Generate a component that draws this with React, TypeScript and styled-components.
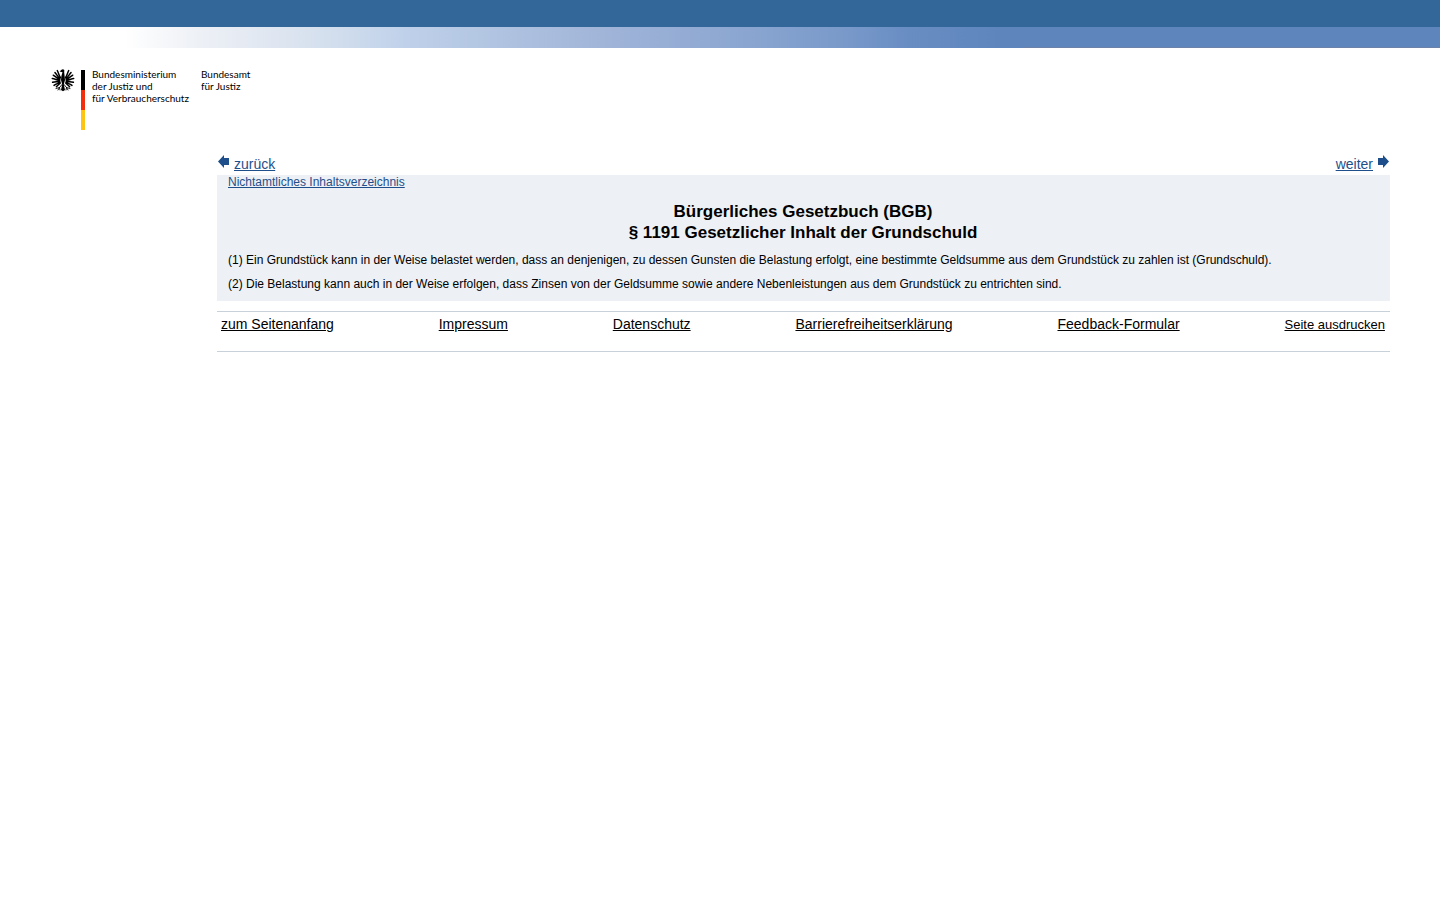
import React from "react";
import styled, { createGlobalStyle } from "styled-components";

const GlobalStyle = createGlobalStyle`
  body {
    margin: 0;
    background: #fff;
    color: #000;
    font-family: "Liberation Sans", Arial, sans-serif;
    font-size: 14px;
    line-height: 14px;
  }
`;

const TopBar = styled.div`
  height: 27px;
  background: #336799;
`;

const FadeBar = styled.div`
  height: 21px;
  background:
    linear-gradient(to right, transparent 1024px, #6c83a9 1024px) bottom / 100% 1px no-repeat,
    linear-gradient(
      to right,
      #fff 125px,
      #eef1f6 195px,
      #e2e8f2 260px,
      #d2deed 335px,
      #bfd1ea 405px,
      #b0c3e0 500px,
      #9fb3d8 615px,
      #8ca7d1 735px,
      #7a9aca 840px,
      #688dc3 910px,
      #5e86bd 1000px
    );
`;

const Header = styled.header`
  padding: 20px 50px 0;
`;

const Logo = styled.a`
  display: flex;
  align-items: flex-start;
  color: #000;
  text-decoration: none;
  font-family: Lato, sans-serif;
  font-size: 10px;
  line-height: 12px;
`;

const Eagle = styled.svg`
  width: 24px;
  height: 24px;
  margin: 0 6px 0 1px;
`;

const Flag = styled.span`
  width: 4px;
  height: 60px;
  margin: 2px 7px 0 0;
  background: linear-gradient(#000 20px, #f22e0c 20px 40px, #fdc411 40px);
`;

const LogoText = styled.span`
  white-space: nowrap;
  margin-right: 12px;
`;

const Main = styled.main`
  margin: 23px 50px 0 217px;
`;

const Pager = styled.nav`
  display: flex;
  justify-content: space-between;
  height: 22px;
`;

const PagerLink = styled.a`
  display: flex;
  gap: 5px;
  color: #1f4f8a;
  line-height: 22px;
`;

const Arrow = styled.svg`
  width: 12px;
  height: 14px;
  margin-top: 2px;
`;

const Law = styled.article`
  background: #edf0f5;
  padding: 0 12px 10px 11px;
`;

const ContentsLink = styled.a`
  display: block;
  width: fit-content;
  color: #1f4f8a;
  font-size: 12px;
  line-height: 14px;
`;

const Title = styled.h1`
  margin: 12px 0 10px;
  text-align: center;
  font-size: 17px;
  line-height: 21px;
`;

const Paragraph = styled.p`
  margin: 0 0 10px;
  font-size: 12px;
  line-height: 14px;

  &:last-child {
    margin: 0;
  }
`;

const Footer = styled.footer`
  display: flex;
  justify-content: space-between;
  align-items: baseline;
  margin-top: 10px;
  padding: 5px 5px 19px 4px;
  border-top: 1px solid #c8d0da;
  border-bottom: 1px solid #c8d0da;
`;

const FooterLink = styled.a<{ $small?: boolean }>`
  color: #000;
  font-size: ${({ $small }) => ($small ? 13 : 14)}px;
`;

const footerLinks = [
  { label: "zum Seitenanfang" },
  { label: "Impressum" },
  { label: "Datenschutz" },
  { label: "Barrierefreiheitserklärung" },
  { label: "Feedback-Formular" },
  { label: "Seite ausdrucken", small: true },
];

function FederalEagle() {
  const wing = (
    <g fill="none" stroke="#000" strokeLinecap="round">
      <path
        strokeWidth="1.5"
        d="M9.500 9.500C7.800 7.500 7.500 4.500 6.300 2.600M9 10.500C7 9.500 6 6.500 4 4.600M8.800 11.500C6.500 11 5 8.500 2.300 7.200M8.800 12.300C6 12.200 4 10.800 1.300 10.600M8.800 13.500C6.500 14.200 4 13.500 1.600 14.200M9 14.500C7 15.500 5 15.800 3 17.400M9.300 15C8 16.500 7 17 5.400 18.800"
      />
      <path strokeWidth=".9" d="M11 16.500L8.500 19.500L5 20.500M8.500 19.500L7 22M8.500 19.500L9 22" />
    </g>
  );
  return (
    <Eagle viewBox="0 0 24 24" aria-hidden="true">
      {wing}
      <g transform="matrix(-1 0 0 1 24 0)">{wing}</g>
      <path d="M8.600 3.400L10.500 1.800Q12 .6 13.300 2L13.200 4.500L13.600 8L14 12L12.800 16.500L14 22L12 23.300L10 22L11.200 16.500L10 12L10.400 8L11.500 4.200Z" />
    </Eagle>
  );
}

function PagerArrow({ forward = false }: { forward?: boolean }) {
  return (
    <Arrow viewBox="0 0 12 14" aria-hidden="true">
      <path
        fill="#1f4f8a"
        d="M1 6.500L7 0V3H12V10H7V13Z"
        transform={forward ? "matrix(-1 0 0 1 12 0)" : undefined}
      />
    </Arrow>
  );
}

export default function App() {
  return (
    <>
      <GlobalStyle />
      <TopBar />
      <FadeBar />
      <Header>
        <Logo href="#">
          <FederalEagle />
          <Flag />
          <LogoText>
            Bundesministerium
            <br />
            der Justiz und
            <br />
            für Verbraucherschutz
          </LogoText>
          <LogoText>
            Bundesamt
            <br />
            für Justiz
          </LogoText>
        </Logo>
      </Header>
      <Main>
        <Pager>
          <PagerLink href="#">
            <PagerArrow />
            zurück
          </PagerLink>
          <PagerLink href="#">
            weiter
            <PagerArrow forward />
          </PagerLink>
        </Pager>
        <Law>
          <ContentsLink href="#">Nichtamtliches Inhaltsverzeichnis</ContentsLink>
          <Title>
            Bürgerliches Gesetzbuch (BGB)
            <br />§ 1191 Gesetzlicher Inhalt der Grundschuld
          </Title>
          <Paragraph>
            (1) Ein Grundstück kann in der Weise belastet werden, dass an denjenigen, zu dessen
            Gunsten die Belastung erfolgt, eine bestimmte Geldsumme aus dem Grundstück zu zahlen ist
            (Grundschuld).
          </Paragraph>
          <Paragraph>
            (2) Die Belastung kann auch in der Weise erfolgen, dass Zinsen von der Geldsumme sowie
            andere Nebenleistungen aus dem Grundstück zu entrichten sind.
          </Paragraph>
        </Law>
        <Footer>
          {footerLinks.map(({ label, small }) => (
            <FooterLink key={label} href="#" $small={small}>
              {label}
            </FooterLink>
          ))}
        </Footer>
      </Main>
    </>
  );
}
